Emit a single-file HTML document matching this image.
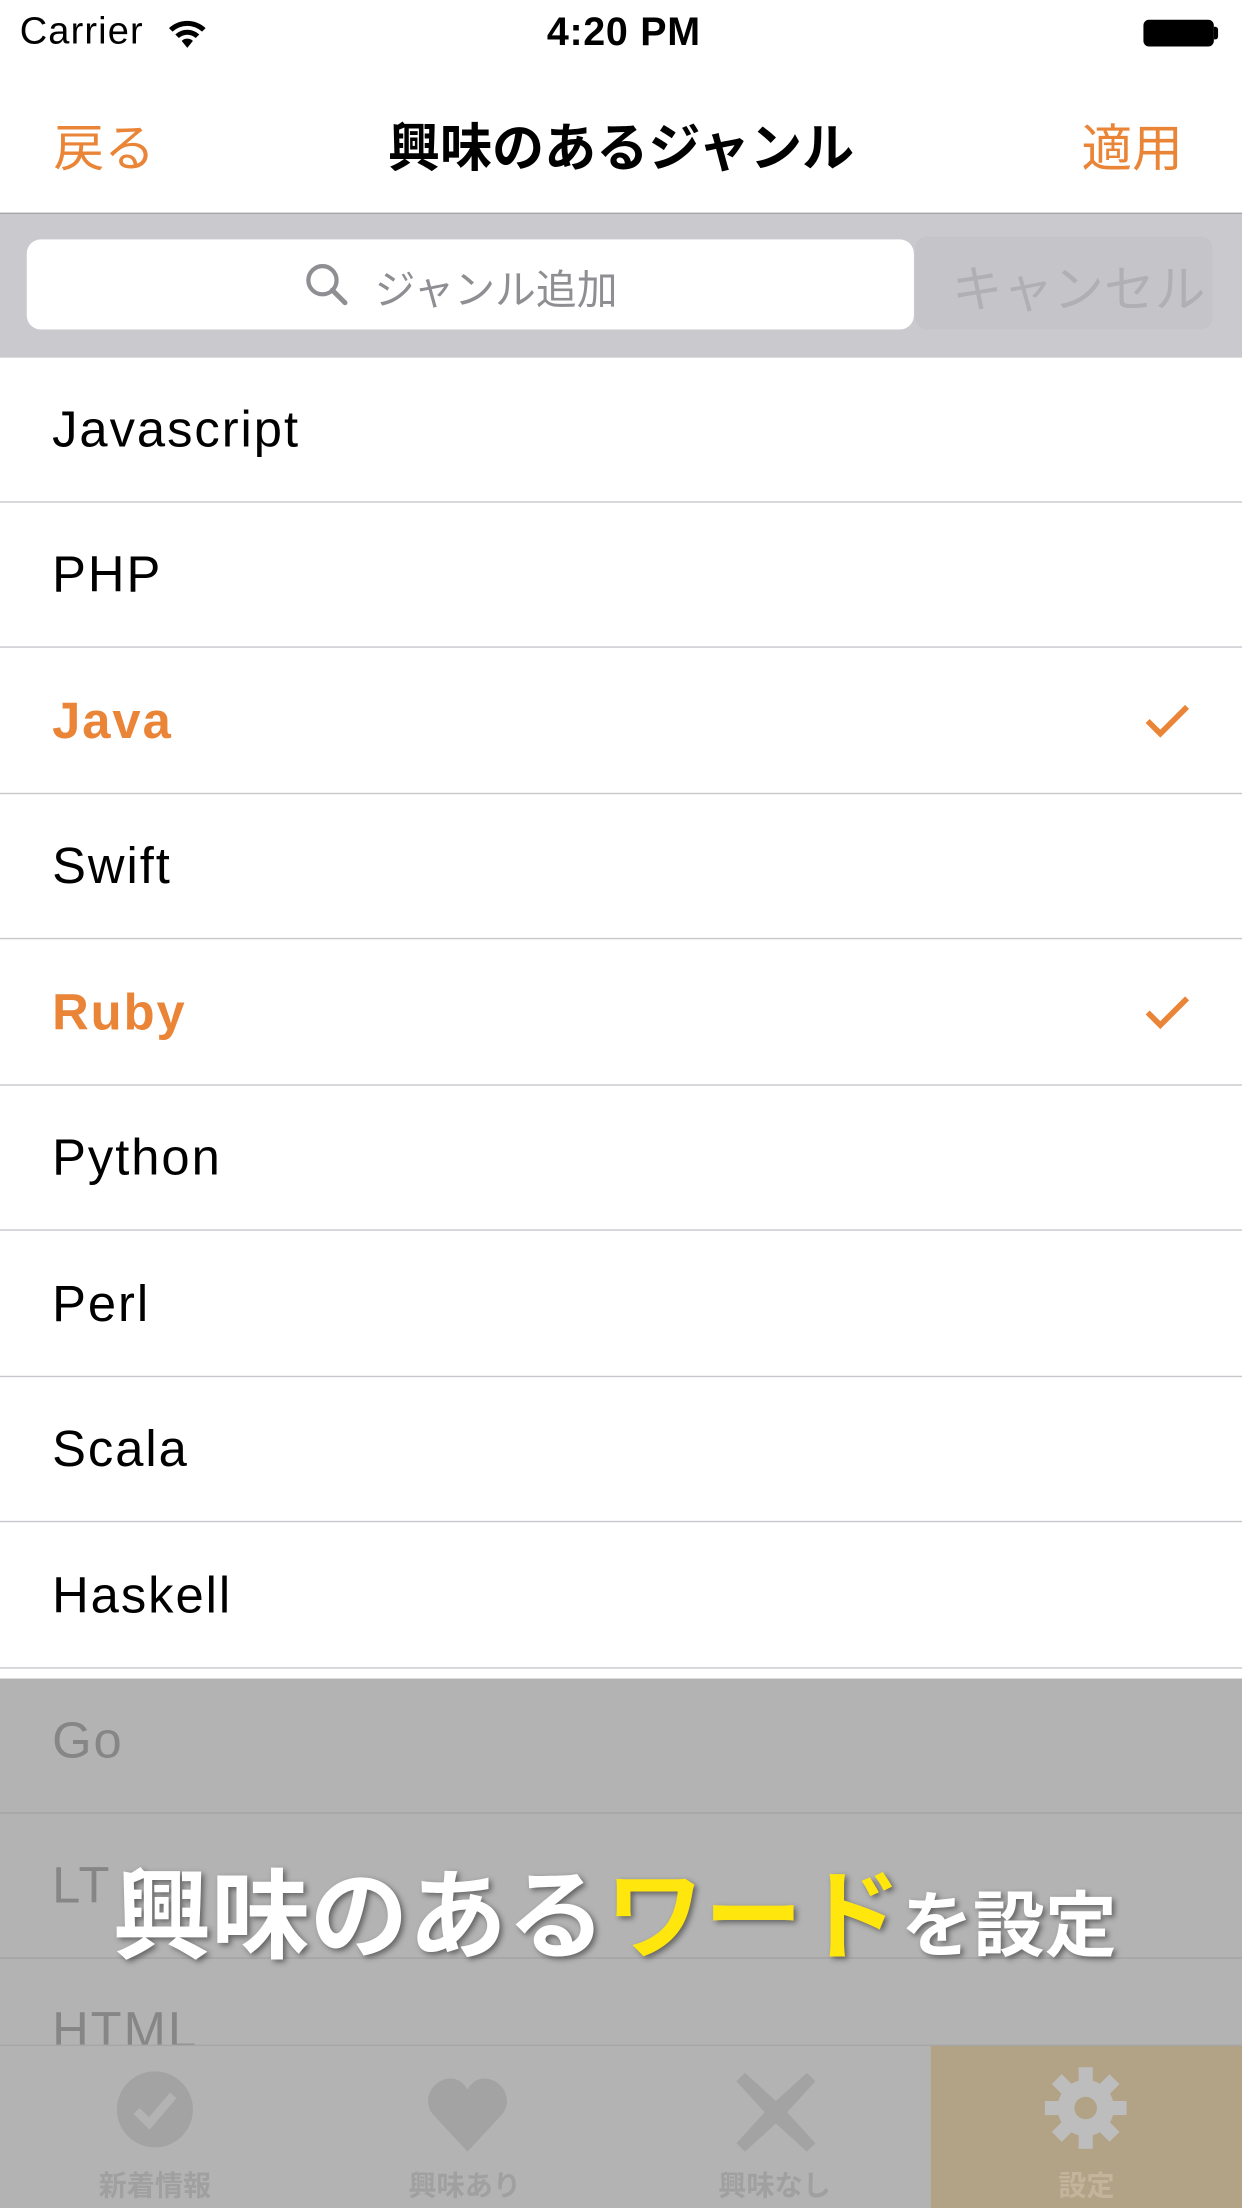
<!DOCTYPE html>
<html><head><meta charset="utf-8"><style>
html,body{margin:0;padding:0;width:1242px;height:2208px;overflow:hidden;background:#fff}
#s{position:absolute;left:0;top:0;width:882px;height:1568px;transform:scale(1.408163);transform-origin:0 0;font-family:"Liberation Sans","Noto Sans CJK JP",sans-serif;background:#fff}
.a{position:absolute;white-space:nowrap}
.row{position:absolute;left:0;width:882px;height:103px;border-bottom:1px solid #c8c7cc;box-sizing:border-box}
.row span{position:absolute;left:37px;top:50%;transform:translateY(-50%);font-size:36px;letter-spacing:1.4px;color:#000}
.row.o span{color:#ea8437;font-weight:bold}
.ck{position:absolute;left:812px;top:38px}
</style></head><body><div id="s">
<div class="a" style="left:14px;top:7px;font-size:27px;letter-spacing:0.8px">Carrier</div>
<svg class="a" style="left:118px;top:12px" width="30" height="24" viewBox="0 0 30 24"><path d="M2 8a19 19 0 0 1 26 0l-2.5 2.5a15.5 15.5 0 0 0-21 0z M6.5 12.5a12.5 12.5 0 0 1 17 0l-2.5 2.5a9 9 0 0 0-12 0z M11 17a6 6 0 0 1 8 0l-4 5z" fill="#000"/></svg>
<div class="a" style="left:0;width:886px;text-align:center;top:7px;font-size:28px;font-weight:bold;letter-spacing:0.5px">4:20 PM</div>
<div class="a" style="left:812px;top:14px;width:50px;height:19px;border:2px solid #000;border-radius:4px;box-sizing:border-box;background:#000"></div>
<div class="a" style="left:862px;top:19px;width:3px;height:9px;background:#000;border-radius:0 2px 2px 0"></div>

<div class="a" style="left:38px;top:77px;font-size:36px;color:#ea8437">戻る</div>
<div class="a" style="left:0;width:882px;text-align:center;top:75px;font-size:37px;font-weight:bold;color:#000">興味のあるジャンル</div>
<div class="a" style="left:768px;top:77px;font-size:36px;color:#ea8437">適用</div>

<div class="a" style="left:0;top:151px;width:882px;height:103px;background:#c9c9ce;border-top:1px solid #a7a7aa;box-sizing:border-box"></div>
<div class="a" style="left:650px;top:168px;width:211px;height:66px;border-radius:8px;background:#c5c5c9"></div>
<div class="a" style="left:676px;top:177px;font-size:36px;color:#b0b0b4">キャンセル</div>
<div class="a" style="left:19px;top:170px;width:630px;height:64px;background:#fff;border-radius:10px"></div>
<svg class="a" style="left:216px;top:186px" width="32" height="32" viewBox="0 0 32 32"><circle cx="13" cy="13" r="10" fill="none" stroke="#8e8e93" stroke-width="3"/><path d="M20 20l9 9" stroke="#8e8e93" stroke-width="3.5" stroke-linecap="round"/></svg>
<div class="a" style="left:266px;top:183px;font-size:29px;color:#8e8e93">ジャンル追加</div>

<div class="row" style="top:254px"><span>Javascript</span></div>
<div class="row" style="top:357px"><span>PHP</span></div>
<div class="row o" style="top:461px"><span>Java</span><svg class="ck" width="34" height="26" viewBox="0 0 34 26"><path d="M3 13l9 9L31 3" fill="none" stroke="#ea8437" stroke-width="4"/></svg></div>
<div class="row" style="top:564px"><span>Swift</span></div>
<div class="row o" style="top:668px"><span>Ruby</span><svg class="ck" width="34" height="26" viewBox="0 0 34 26"><path d="M3 13l9 9L31 3" fill="none" stroke="#ea8437" stroke-width="4"/></svg></div>
<div class="row" style="top:771px"><span>Python</span></div>
<div class="row" style="top:875px"><span>Perl</span></div>
<div class="row" style="top:978px"><span>Scala</span></div>
<div class="row" style="top:1082px"><span>Haskell</span></div>

<div class="a" style="left:0;top:1192px;width:882px;height:376px;background:#b3b3b3"></div>
<div class="a" style="left:37px;top:1215px;font-size:36px;letter-spacing:1.4px;color:#868686">Go</div>
<div class="a" style="left:0;top:1287px;width:882px;height:1px;background:#a3a3a3"></div>
<div class="a" style="left:37px;top:1318px;font-size:36px;letter-spacing:1.4px;color:#868686">LT</div>
<div class="a" style="left:0;top:1390px;width:882px;height:1px;background:#a3a3a3"></div>
<div class="a" style="left:0;top:1418px;width:882px;height:34px;overflow:hidden"><div class="a" style="left:37px;top:3px;font-size:36px;letter-spacing:1.4px;color:#868686">HTML</div></div>
<div class="a" style="left:0;top:1452px;width:882px;height:1px;background:#a6a6a6"></div>
<div class="a" style="left:661px;top:1453px;width:221px;height:115px;background:#b2a286"></div>

<svg class="a" style="left:82px;top:1470px" width="56" height="56" viewBox="0 0 56 56"><circle cx="28" cy="28" r="27" fill="#a3a3a3"/><path d="M15 29l9 9 17-20" fill="none" stroke="#b3b3b3" stroke-width="6"/></svg>
<svg class="a" style="left:302px;top:1474px" width="60" height="56" viewBox="0 0 60 56"><path d="M30 54L5 27C-3 16 6 2 18 2c6 0 10 4 12 8 2-4 6-8 12-8 12 0 21 14 13 25z" fill="#a3a3a3"/></svg>
<svg class="a" style="left:521px;top:1470px" width="60" height="60" viewBox="0 0 60 60"><path d="M8 2L30 22 52 2 58 8 38 30 58 52 52 58 30 38 8 58 2 52 22 30 2 8z" fill="#a3a3a3"/></svg>
<svg class="a" style="left:740px;top:1466px" width="62" height="62" viewBox="0 0 62 62"><g fill="#bdbdbd"><circle cx="31" cy="31" r="20"/><rect x="26" y="2" width="10" height="58"/><rect x="2" y="26" width="58" height="10"/><rect x="26" y="2" width="10" height="58" transform="rotate(45 31 31)"/><rect x="26" y="2" width="10" height="58" transform="rotate(-45 31 31)"/></g><circle cx="31" cy="31" r="8" fill="#b2a286"/></svg>
<div class="a" style="left:0;width:220px;text-align:center;top:1536px;font-size:20px;font-weight:bold;color:#a0a0a0">新着情報</div>
<div class="a" style="left:220px;width:220px;text-align:center;top:1536px;font-size:20px;font-weight:bold;color:#a0a0a0">興味あり</div>
<div class="a" style="left:440px;width:220px;text-align:center;top:1536px;font-size:20px;font-weight:bold;color:#a0a0a0">興味なし</div>
<div class="a" style="left:661px;width:221px;text-align:center;top:1536px;font-size:20px;font-weight:bold;color:#c2b59c">設定</div>

<div class="a" style="left:80px;top:1326px;font-weight:bold;color:#fff;text-shadow:2px 2px 4px rgba(0,0,0,0.45);line-height:1"><span style="font-size:70px">興味のある</span><span style="font-size:70px;color:#ffe60d">ワード</span><span style="font-size:51px">を設定</span></div>
</div></body></html>
